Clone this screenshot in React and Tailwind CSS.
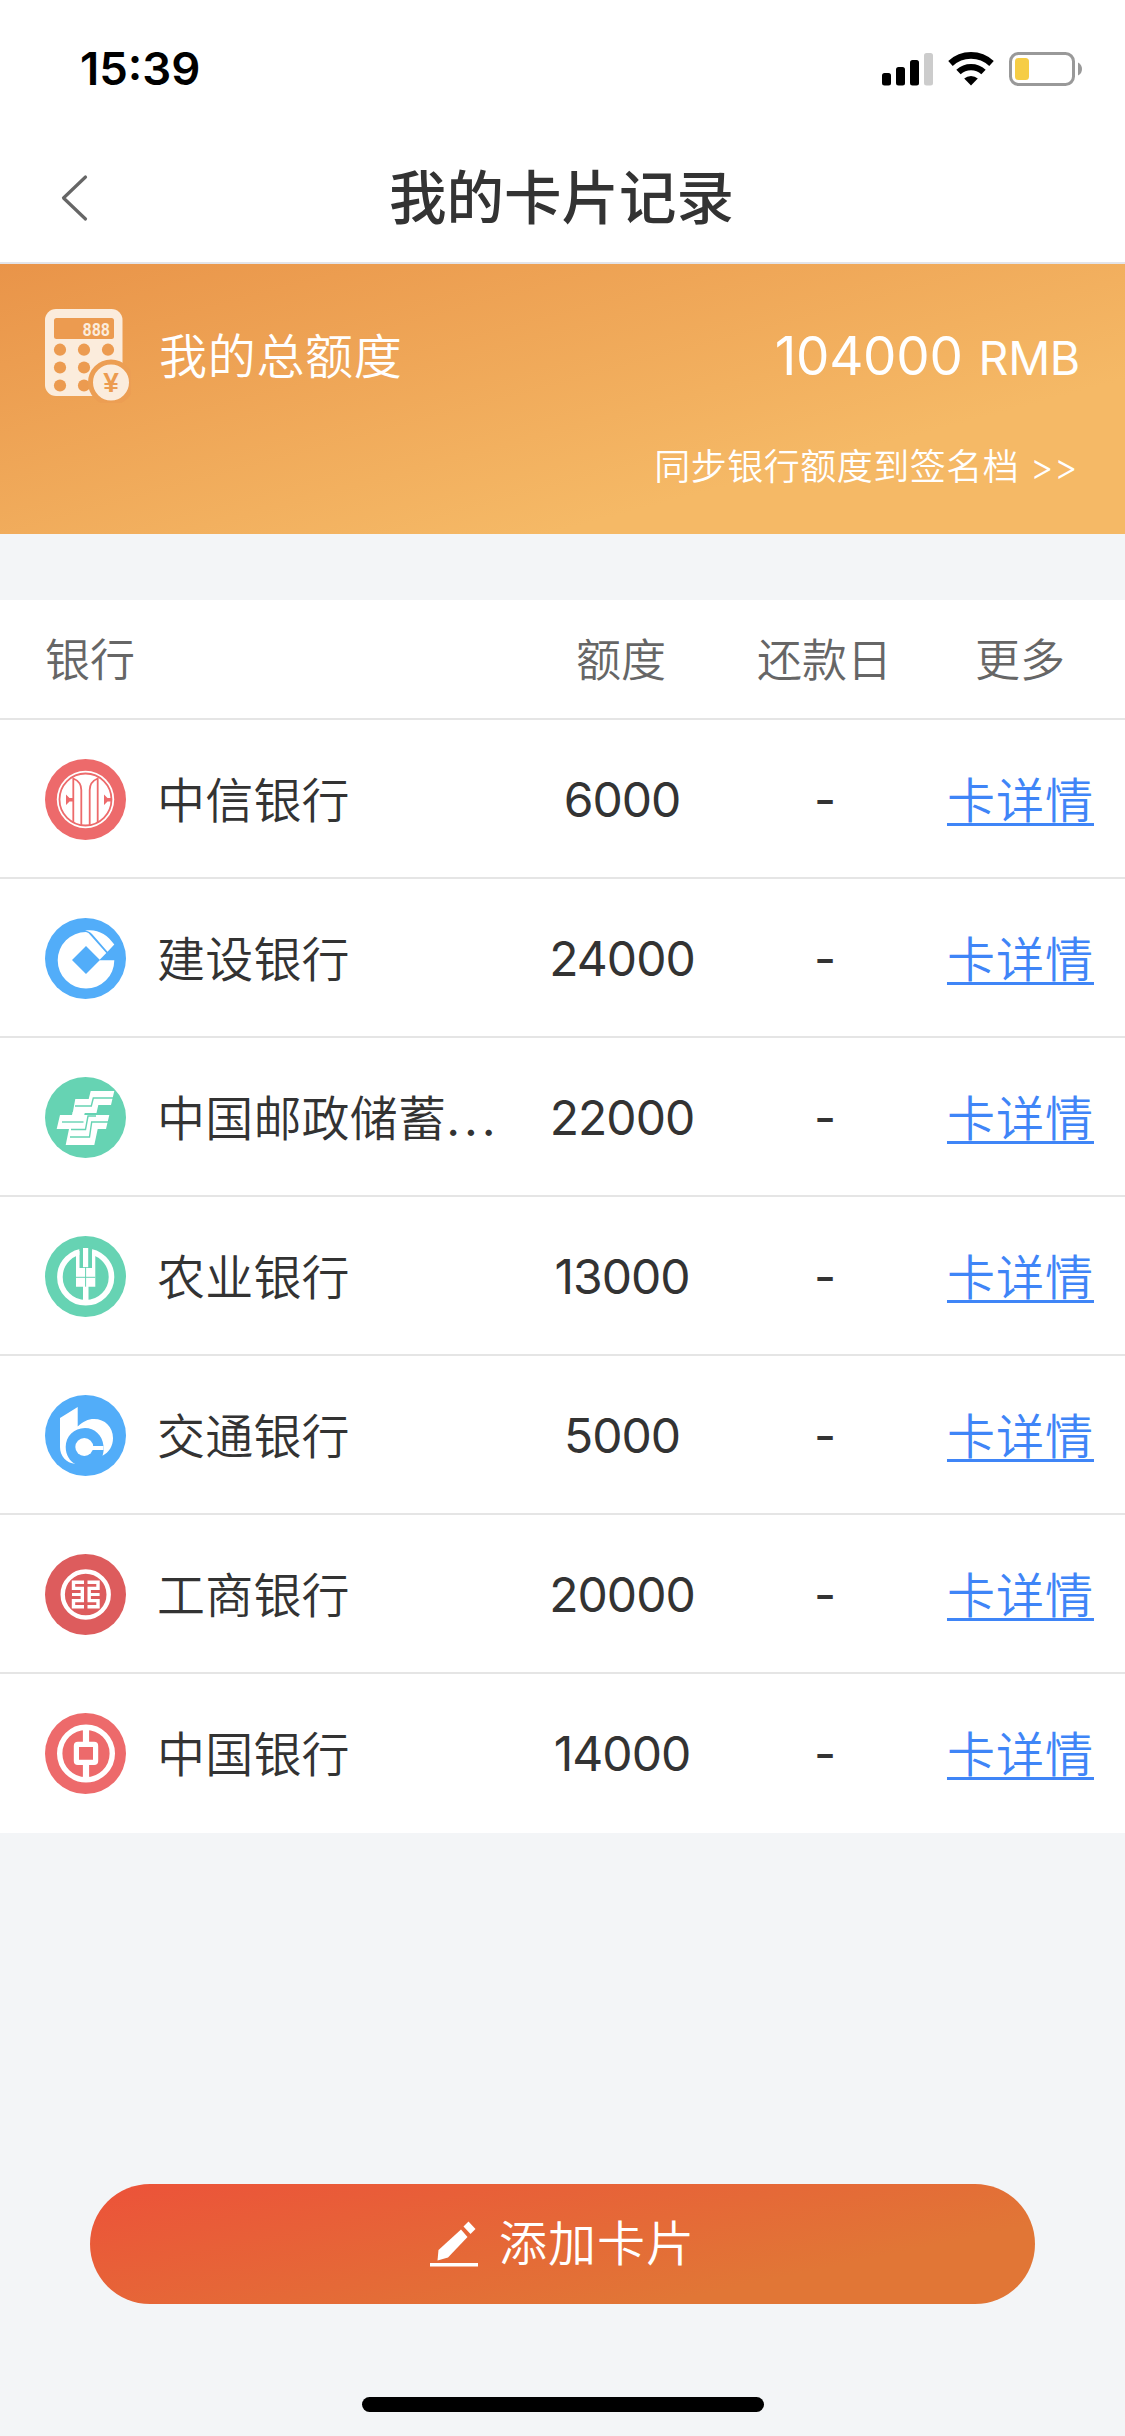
import React from 'react'

const banks = [
    { id: 1, name: '中信银行', amount: 6000, Logo: CiticLogo },
    { id: 2, name: '建设银行', amount: 24000, Logo: CcbLogo },
    { id: 3, name: '中国邮政储蓄银行', amount: 22000, Logo: PostLogo },
    { id: 4, name: '农业银行', amount: 13000, Logo: AbcLogo },
    { id: 5, name: '交通银行', amount: 5000, Logo: BocomLogo },
    { id: 6, name: '工商银行', amount: 20000, Logo: IcbcLogo },
    { id: 7, name: '中国银行', amount: 14000, Logo: BocLogo },
];

const MAX_NAME = 6;

function Badge({ color, children }) {
    return (
        <svg viewBox="0 0 81 81" className="w-[81px] h-[81px] shrink-0">
            <circle cx="40.5" cy="40.5" r="40.5" fill={color} />
            {children}
        </svg>
    );
}

function CiticLogo() {
    return (
        <Badge color="#ed6a6b">
            <circle cx="40.5" cy="40.5" r="28.7" fill="#fff" />
            <g fill="none" stroke="#ed6a6b" strokeWidth="1.8">
                <circle cx="40.5" cy="40.5" r="26" />
                <path d="M28.3 64V19.5C33 21.5 36.3 25 36.3 31V66" />
                <path d="M52.7 64V19.5C48 21.5 44.7 25 44.7 31V66" />
            </g>
            <path d="M21 35.5L24.5 39H28V42.5H24.5L21 46Z" fill="#ed6a6b" />
            <path d="M59 35.5L62.5 39H66.5V42.5H62.5L59 46Z" fill="#ed6a6b" />
        </Badge>
    );
}

function CcbLogo() {
    return (
        <Badge color="#52adf9">
            <path d="M54.7 42.3H69.3A28.3 28.3 0 1 1 41 14L43.5 15L61.3 35L54.7 41.7L41 28L27 42L41 56Z" fill="#fff" />
            <path d="M40 12.6C52 10.5 62 16 69.3 26.5L62.5 33.7L47.5 16.5C45 14 43 13 40 12.6Z" fill="#fff" />
        </Badge>
    );
}

function PostLogo() {
    return (
        <Badge color="#66d3b3">
            <path d="M30.3 22H43.7L45.7 14H69.3L66 28H53.3L51.5 36H27.7Z" fill="#fff" />
            <path d="M15 38H64.3L61 52H52.7L49.3 68H20.7L24 52H11.7Z" fill="#fff" />
            <path d="M27.7 35H40L39 39H26.7Z" fill="#fff" />
            <g fill="none" stroke="#66d3b3" strokeWidth="1.4">
                <path d="M69 21H48.3L46.3 29H30" />
                <path d="M17 45H38.5" />
                <path d="M64 45H46.7L44.5 60H25" />
                <path d="M51 39H43L40.5 52.5H26" />
            </g>
        </Badge>
    );
}

function AbcLogo() {
    return (
        <Badge color="#66d3b3">
            <circle cx="40.7" cy="41" r="25.8" fill="none" stroke="#fff" strokeWidth="5.6" />
            <rect x="34.3" y="10" width="12.8" height="22" fill="#66d3b3" />
            <path d="M31 15H34.5V32H47V15H50.3V50.7H43.5V68H38V50.7H31Z" fill="#fff" />
            <rect x="38" y="12" width="5.2" height="19.2" fill="#fff" />
            <path d="M40.6 31V50.7M31 41.3H50.3" stroke="#66d3b3" strokeWidth="1" />
        </Badge>
    );
}

function BocomLogo() {
    return (
        <Badge color="#52adf9">
            <path d="M15 23L32.7 12V31.5C38 26.5 43 24 49 24C60 24 68 32 68 43C68 51 64 57.5 57.5 60.7C58.8 57 58.8 54 58.5 51C57.5 40 49.5 33 40 33C29 33 20.7 41.5 20.7 52C20.7 60 25 66.5 30.5 69C21 68 15 61 15 52Z" fill="#fff" />
            <circle cx="39.3" cy="52" r="9" fill="#fff" />
            <rect x="47" y="51" width="11.5" height="4" fill="#fff" />
        </Badge>
    );
}

function IcbcLogo() {
    return (
        <Badge color="#dd5c5d">
            <circle cx="40.7" cy="40.5" r="23" fill="none" stroke="#fff" strokeWidth="4.4" />
            <g fill="none" stroke="#fff" strokeWidth="3.4">
                <path d="M39 28.3H28.5V34.4H37.3V46.6H28.5V52.7H39" />
                <path d="M42.5 28.3H53V34.4H44.2V46.6H53V52.7H42.5" />
                <path d="M27 40.5H37.3M44.2 40.5H54.6" strokeWidth="3" />
            </g>
        </Badge>
    );
}

function BocLogo() {
    return (
        <Badge color="#ed6a6b">
            <circle cx="41" cy="40.5" r="26.3" fill="none" stroke="#fff" strokeWidth="5.4" />
            <rect x="31.4" y="31.4" width="19.2" height="18" rx="1.5" fill="none" stroke="#fff" strokeWidth="5.2" />
            <path d="M41 14V29.5M41 51V67" stroke="#fff" strokeWidth="6.2" />
        </Badge>
    );
}

function StatusBar() {
    return (
        <div className="h-[132px] flex items-start justify-between pl-[80px] pr-[43px]">
            <div className="mt-[42px] text-[45.5px] leading-[54px] font-semibold text-black">15:39</div>
            <svg viewBox="0 0 201 36" className="mt-[51px] w-[201px] h-[36px]">
                {/* signal */}
                <rect x="1" y="22" width="9" height="12.5" rx="2.5" />
                <rect x="15" y="16" width="9" height="18.5" rx="2.5" />
                <rect x="29" y="9" width="9" height="25.5" rx="2.5" />
                <rect x="43" y="2" width="9" height="32.5" rx="2.5" fill="#cccccc" />
                {/* wifi */}
                <g fill="none" stroke="#000">
                    <path d="M69.5 12.5A30 30 0 0 1 110.5 12.5" strokeWidth="6.6" />
                    <path d="M77.5 21A18.5 18.5 0 0 1 102.5 21" strokeWidth="6.4" />
                </g>
                <path d="M90 34.5L83.2 27.6A10 10 0 0 1 96.8 27.6Z" />
                {/* battery */}
                <rect x="129.5" y="2.5" width="63" height="31" rx="8" fill="none" stroke="#999" strokeWidth="3" />
                <rect x="134" y="7" width="14" height="22" rx="3.5" fill="#f6cd45" />
                <path d="M197 11.5C200 13 201 15.5 201 18S200 23 197 24.5Z" fill="#999" />
            </svg>
        </div>
    );
}

function CalculatorIcon() {
    return (
        <svg viewBox="0 0 86 94" className="w-[86px] h-[94px] shrink-0">
            <rect x="0" y="0" width="77.5" height="87" rx="11" fill="#fbecdc" />
            <rect x="9" y="9" width="60" height="21" rx="2.5" fill="#ec9b50" />
            <text x="37.5" y="27" fontFamily="Liberation Mono, monospace" fontWeight="700" fontSize="21" textLength="27.5" lengthAdjust="spacingAndGlyphs" fill="#fbecdc">888</text>
            <g fill="#ec9b50">
                <circle cx="15" cy="40.7" r="6.1" />
                <circle cx="39" cy="40.7" r="6.1" />
                <circle cx="63" cy="40.7" r="6.1" />
                <circle cx="15" cy="58.5" r="6.1" />
                <circle cx="39" cy="58.5" r="6.1" />
                <circle cx="15" cy="76.5" r="6.1" />
                <circle cx="39" cy="76.5" r="6.1" />
            </g>
            <circle cx="66" cy="73.5" r="20.5" fill="#fbecdc" stroke="#ec9e53" strokeWidth="5" />
            <text x="66" y="83" textAnchor="middle" fontFamily="Liberation Sans, sans-serif" fontWeight="700" fontSize="28" fill="#ec9b50">¥</text>
        </svg>
    );
}

function App() {
    return (
        <div className="w-[1125px] h-[2436px] flex flex-col bg-[#f3f5f7] text-[#333] font-[350] font-['Inter','Noto_Sans_CJK_SC',sans-serif]">
            {/* Header */}
            <header className="h-[264px] bg-white border-b-2 border-[#e3e4e9]">
                <StatusBar />
                <div className="h-[130px] pt-[2px] grid grid-cols-[200px_1fr_202px] items-center">
                    <svg viewBox="0 0 28 48" className="ml-[60px] w-[28px] h-[48px]">
                        <path d="M25.5 3L3.5 24L25.5 45" fill="none" stroke="#666" strokeWidth="3.2" strokeLinecap="round" strokeLinejoin="round" />
                    </svg>
                    <h1 className="text-center text-[57.5px] leading-[80px] font-medium">我的卡片记录</h1>
                </div>
            </header>

            {/* Total */}
            <section className="h-[270px] pl-[45px] pr-[45px] text-white bg-[linear-gradient(165deg,#e99449_0%,#f5b966_73%)]">
                <div className="pt-[45px] flex">
                    <CalculatorIcon />
                    <div className="mt-[1px] ml-[28px] text-[48px] leading-[94px] tracking-[0.7px]">我的总额度</div>
                    <div className="ml-auto flex items-baseline leading-[94px] font-normal">
                        <span className="text-[53px] tracking-[-0.3px]">104000</span>
                        <span className="ml-[16px] text-[46.5px] tracking-[-0.3px]">RMB</span>
                    </div>
                </div>
                <div className="mt-[35px] pr-[2px] text-right text-[36px] leading-[54px] tracking-[0.5px]">同步银行额度到签名档 &gt;&gt;</div>
            </section>

            {/* Table */}
            <section className="mt-[66px] bg-white">
                <div className="h-[120px] pt-[3px] grid grid-cols-[519px_204px_203px_188px] items-center border-b-2 border-[#e5e5e5] text-[45px] text-[#666] text-center">
                    <div className="pl-[45px] text-left">银行</div>
                    <div>额度</div>
                    <div>还款日</div>
                    <div>更多</div>
                </div>
                {banks.map(({ id, name, amount, Logo }) => (
                    <div key={id} className="h-[159px] pt-[2px] grid grid-cols-[520px_204px_202px_189px] items-center border-b-2 border-[#e5e5e5] last:border-b-white text-[48px] text-center">
                        <div className="flex items-center pl-[45px]">
                            <Logo />
                            <div className="mt-[2px] ml-[31px] whitespace-nowrap tracking-[0.2px]">
                                {name.slice(0, MAX_NAME)}
                                {name.length > MAX_NAME && <span className="font-normal tracking-[4px]">...</span>}
                            </div>
                        </div>
                        <div className="mt-[1px] font-normal tracking-[-1px]">{amount}</div>
                        <div className="mt-[1px] font-normal">-</div>
                        <a href="#" className="mt-[2px] text-[#3f85f7] tracking-[1px] underline underline-offset-[5px] decoration-[3px]">卡详情</a>
                    </div>
                ))}
            </section>

            {/* Add card */}
            <button type="button" className="mt-[351px] mx-[90px] h-[120px] shrink-0 rounded-full flex items-center justify-center text-white text-[48px] tracking-[1px] bg-[linear-gradient(168deg,#ec5239_0%,#e17636_75%)]">
                <svg viewBox="0 0 48 46" className="mr-[21px] w-[48px] h-[46px]" fill="#fff">
                    <path d="M31 8.5L37.5 16L18 36.5L7.5 39.5L8.5 29Z" />
                    <path d="M33.5 5.5L38.5 0.5L45.5 8L40.5 13Z" />
                    <rect x="0" y="42" width="48" height="3.5" />
                </svg>
                <span>添加卡片</span>
            </button>

            {/* Home indicator */}
            <div className="mt-[93px] mx-auto w-[402px] h-[15px] shrink-0 rounded-full bg-black" />
        </div>
    );
}

export default App;
